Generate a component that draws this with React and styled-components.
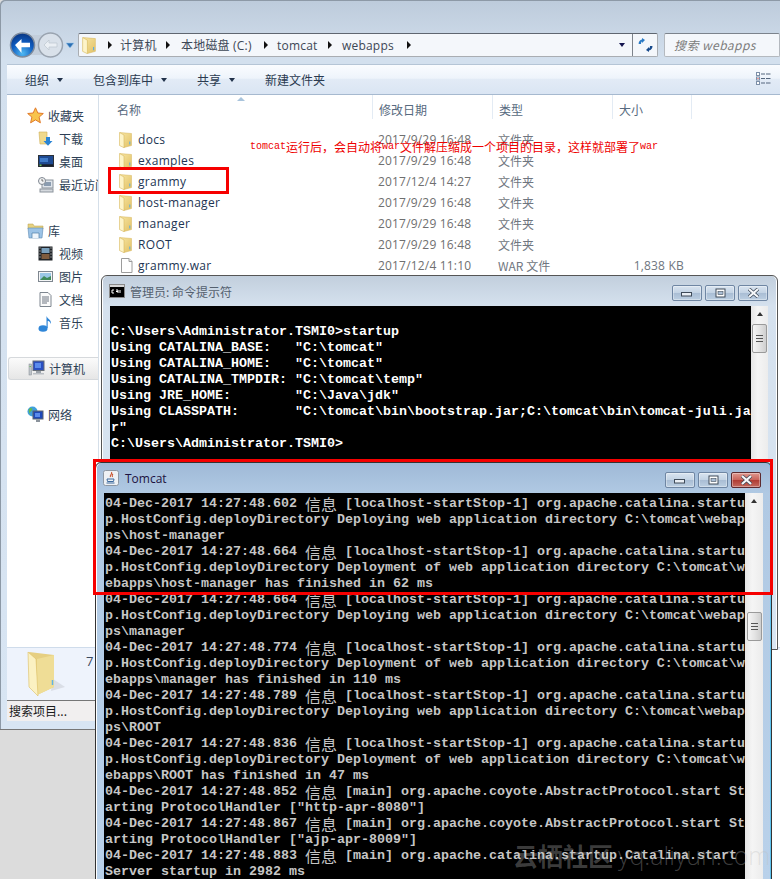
import React from "react";
import styled, { createGlobalStyle } from "styled-components";

const UI = `"Open Sans", "Noto Sans CJK SC", sans-serif`;
const CJK = `"Noto Sans CJK SC", "Open Sans", sans-serif`;
const MONO = `"Liberation Mono", "DejaVu Sans Mono", monospace`;
const COLS = "273px 120px 120px 80px";

const Global = createGlobalStyle`
  html, body { margin: 0; padding: 0; height: 879px; overflow: hidden; background: #dcdcdc; }
  * { box-sizing: border-box; }
`;

const Desktop = styled.div`
  position: relative; width: 780px; height: 879px; overflow: hidden; background: #dcdcdc;
`;
const Explorer = styled.div`
  width: 780px; height: 730px; display: flex; flex-direction: column;
  background: linear-gradient(#bdcbdb 0, #d3e0ee 60px, #d8e5f3 100%);
  border-bottom: 1px solid #777; border-radius: 5px 0 0 0;
  box-shadow: inset 1px 1px 0 #8d99a6;
  font-family: ${UI}; overflow: hidden;
`;
const AddressRow = styled.div`
  margin-top: 33px; height: 24px; display: flex; align-items: center; padding-left: 9px;
`;
const NavGroup = styled.div`
  width: 69px; height: 26px; display: flex; align-items: center; flex: none;
`;
const AddressBox = styled.div`
  width: 580px; height: 24px; display: flex; align-items: center; flex: none;
  background: #f4f7fb; border: 1px solid #a9adb2; border-top-color: #5f6670; border-radius: 2px;
  position: relative;
`;
const Crumbs = styled.div`
  flex: 1; display: flex; align-items: center; height: 100%; padding-left: 3px; min-width: 0;
`;
const CrumbText = styled.span`
  font-size: 12px; color: #3d4756; white-space: nowrap; width: ${p => p.$w}px; letter-spacing: .2px;
`;
const CrumbSep = styled.span`
  width: 0; height: 0; border-style: solid; border-width: 4.5px 0 4.5px 4px;
  border-color: transparent transparent transparent #111; margin: 0 ${p => p.$r}px 0 ${p => p.$l}px; flex: none;
`;
const DropCaret = styled.span`
  width: 0; height: 0; border-style: solid; border-width: 4px 3.5px 0 3.5px;
  border-color: #14144f transparent transparent transparent; margin-right: 7px;
`;
const RefreshBox = styled.div`
  width: 25px; height: 100%; border-left: 1px solid #7d838b; display: flex; align-items: center; justify-content: center;
`;
const SearchBox = styled.div`
  margin-left: 6px; flex: 1; height: 24px; background: #f4f7fb; border: 1px solid #b4b9bf; border-top-color: #7c838c;
  border-radius: 2px; padding-left: 9px; font: italic 12px ${CJK}; color: #7c7c7c; line-height: 22px; white-space: nowrap;
  letter-spacing: .45px;
`;
const Toolbar = styled.div`
  margin-top: 7px; height: 31px; margin-left: 7px; display: flex; align-items: center; position: relative;
  background: linear-gradient(#fafcff 0, #eef4fb 45%, #e2ebf6 50%, #dae5f3 100%);
  border-top: 1px solid #b5c5d6; border-bottom: 1px solid #a6b9cf;
  padding-left: 18px; font-size: 12px; color: #2a3a50; font-family: ${CJK};
`;
const ToolItem = styled.span`
  display: flex; align-items: center; gap: 8px; width: ${p => p.$w}px; white-space: nowrap;
`;
const ToolCaret = styled.span`
  width: 0; height: 0; border-style: solid; border-width: 4px 3.5px 0 3.5px;
  border-color: #22324a transparent transparent transparent;
`;
const ViewIcon = styled.span`
  position: absolute; left: 749px; top: 7px; line-height: 0;
`;
const Body = styled.div`
  flex: 1; display: flex; margin-left: 7px; background: #fff; min-height: 0;
`;
const Sidebar = styled.div`
  width: 92px; flex: none; border-right: 1px solid #d5dfe9; padding-top: 9px; overflow: hidden;
  display: flex; flex-direction: column; font-family: ${CJK}; font-size: 12px; color: #2d3f55;
`;
const SideRow = styled.div`
  height: 23px; display: flex; align-items: center; white-space: nowrap; flex: none;
  padding-left: ${p => (p.$child ? 31 : 20)}px; gap: ${p => (p.$child ? 5 : 4)}px;
  ${p => p.$selected && `
    margin: 0 0 0 1px; padding-left: 19px; border: 1px solid #d6d9dc; border-right: 0; border-radius: 3px 0 0 3px;
    background: linear-gradient(#fbfbfb, #e6e6e6);
  `}
`;
const SideGap = styled.div`height: 23px; flex: none;`;
const IconSlot = styled.span`
  width: ${p => p.$s}px; height: ${p => p.$h || p.$s}px; flex: none; line-height: 0; display: block;
`;
const Main = styled.div`flex: 1; display: flex; flex-direction: column; min-width: 0;`;
const HeaderRow = styled.div`
  height: 29px; display: grid; grid-template-columns: ${COLS}; position: relative;
  font-family: ${CJK}; font-size: 12px; color: #576a80;
`;
const HeadCell = styled.div`
  padding: 6px 0 0 ${p => (p.$first ? 18 : 6)}px; height: 24px; line-height: 18px;
  ${p => !p.$first && `border-left: 1px solid #e3ebf4;`}
  ${p => p.$last && `border-right: 1px solid #e3ebf4;`}
`;
const SortArrow = styled.span`
  position: absolute; left: 138px; top: 2px; width: 0; height: 0; border-style: solid;
  border-width: 0 4px 4px 4px; border-color: transparent transparent #a9c4dc transparent;
`;
const FileList = styled.div`padding-top: 5px;`;
const FileRow = styled.div`
  height: 21px; display: grid; grid-template-columns: ${COLS}; align-items: center;
  font-size: 12px; white-space: nowrap;
`;
const NameCell = styled.div`
  display: flex; align-items: center; gap: 4px; padding-left: 20px; color: #1c3553; letter-spacing: .32px;
`;
const DateCell = styled.div`padding-left: 6px; color: #6f6f6f; letter-spacing: .18px;`;
const TypeCell = styled.div`padding-left: 6px; color: #6f7680; font-family: ${CJK};`;
const SizeCell = styled.div`text-align: right; padding-right: 8px; color: #6f7680; letter-spacing: .2px;`;
const Spacer = styled.div`flex: 1;`;
const DetailPane = styled.div`
  margin-left: 7px; height: 53px; flex: none; background: #eef3fc; border-top: 1px solid #cfdceb;
  padding: 3px 0 0 20px; display: flex; gap: 21px; font-size: 13px; color: #3b4a60;
`;
const Status = styled.div`
  margin: 0 0 8px 7px; height: 21px; flex: none; background: #f1efef; border-top: 1px solid #767676;
  padding-left: 2px; font: 12px/20px ${CJK}; color: #1b1b1b;
`;

const Win = styled.div`
  position: absolute; left: ${p => p.$x}px; top: ${p => p.$y}px; width: ${p => p.$w}px; height: ${p => p.$h}px;
  border: 1px solid ${p => (p.$active ? "#333" : "#555")}; border-radius: 6px 6px 0 0; overflow: hidden;
  display: flex; flex-direction: column; padding: 0 ${p => p.$padR}px 0 ${p => p.$padL}px;
  background: ${p => p.$active
    ? "linear-gradient(#9fb9d7 0, #b0c9e3 30px, #b9d1ea 100%)"
    : "linear-gradient(#c2cfdd 0, #d5e1ee 30px, #d9e6f3 100%)"};
  box-shadow: ${p => (p.$active ? "inset 1px 0 0 #fff, inset -1px 0 0 #5fc3ee" : "inset 1px 0 0 #fff, inset -1px 0 0 #fff")};
`;
const TitleBar = styled.div`
  height: ${p => p.$h}px; flex: none; display: flex; align-items: center; gap: ${p => p.$gap}px; position: relative;
  font-size: 12px; margin-left: -1px;
`;
const TitleText = styled.span`
  font-family: ${p => (p.$latin ? UI : CJK)}; font-size: 12px; color: ${p => p.$c};
`;
const Captions = styled.div`
  position: absolute; right: ${p => p.$r}px; top: ${p => p.$t}px; display: flex; gap: 3px;
`;
const CapBtn = styled.div`
  width: 30px; height: 16px; border-radius: 2px; display: flex; align-items: center; justify-content: center;
  border: 1px solid ${p => (p.$close ? "#5d2a2f" : "#6f86a3")};
  background: ${p => (p.$close
    ? "linear-gradient(#e0988f 0, #c9645b 48%, #b03c33 52%, #c46a5f 100%)"
    : "linear-gradient(#d9e4f0 0, #c3d3e4 48%, #a9bdd4 52%, #bccfe2 100%)")};
  box-shadow: inset 0 0 0 1px rgba(255,255,255,.35);
`;
const TermRow = styled.div`flex: 1; display: flex; min-height: 0;`;
const Term = styled.div`
  width: ${p => p.$w}px; flex: none; background: #000; overflow: hidden; padding-top: ${p => p.$pt}px;
  padding-left: 1px; color: ${p => p.$c};
  font: bold 13.33px/16px ${MONO};
`;
const TermLine = styled.div`height: 16px; white-space: pre; overflow: hidden; width: 640px;`;
const TermCjk = styled.span`
  font: 400 16px/16px ${CJK}; display: inline-block; width: 32px; height: 16px; vertical-align: top; color: inherit; letter-spacing: 0;
`;
const ScrollTrack = styled.div`
  flex: none; width: ${p => p.$w}px; background: linear-gradient(90deg, #e6e6e6, #f5f5f5 40%, #ececec); position: relative;
  display: flex; flex-direction: column; align-items: center;
`;
const ScrollUp = styled.span`
  margin-top: 6px; width: 0; height: 0; border-style: solid; border-width: 0 3.5px 4px 3.5px;
  border-color: transparent transparent #333 transparent;
`;
const Thumb = styled.div`
  margin-top: ${p => p.$t}px; width: 15px; height: 29px; border: 1px solid #9a9a9a; border-radius: 2px;
  background: linear-gradient(90deg, #f5f5f5, #e4e4e4 50%, #cfcfcf);
  display: flex; flex-direction: column; justify-content: center; align-items: center; gap: 2px;
`;
const Grip = styled.span`width: 7px; height: 1px; background: #555;`;
const RedBox = styled.div`
  position: absolute; left: ${p => p.$x}px; top: ${p => p.$y}px; width: ${p => p.$w}px; height: ${p => p.$h}px;
  border: 3px solid #f60000; pointer-events: none;
`;
const Note = styled.div`
  position: absolute; left: 250px; top: 139px; color: #ee0000; font: 12px/16px ${CJK}; white-space: nowrap; display: flex;
`;
const NoteLatin = styled.span`font: 400 10px/16px ${MONO};`;
const RightEdge = styled.div`
  position: absolute; left: 772px; top: 650px; width: 8px; bottom: 0; background: #fff;
`;
const Watermark = styled.div`
  position: absolute; left: 513px; top: 839px; display: flex; align-items: center; gap: 5px; white-space: nowrap;
  color: rgba(190,190,190,.32); pointer-events: none;
`;
const MarkCn = styled.span`font: 700 25px/32px ${CJK};`;
const MarkEn = styled.span`font: 300 25px/32px "Open Sans", sans-serif;`;

const Folder = ({ w = 13, h = 16 }) => (
  <svg width={w} height={h} viewBox="0 0 13 16">
    <defs>
      <linearGradient id="fb" x1="0" x2="1" y1="0" y2="1">
        <stop offset="0" stopColor="#f7e6a4" /><stop offset="1" stopColor="#e2c164" />
      </linearGradient>
    </defs>
    <path d="M1 .5 L12.500 1.500 V13.500 L5 15.500Z" fill="url(#fb)" stroke="#d6b65e" strokeWidth=".5" />
    <path d="M.5.5 L5 3 V15.700 L.5 13.500Z" fill="#fdf4c9" stroke="#d8b95f" strokeWidth=".6" />
    <path d="M10.800 9.500v3" stroke="#58ade6" strokeWidth="1" />
  </svg>
);
const BigFolder = () => (
  <svg width="38" height="46" viewBox="0 0 38 46">
    <path d="M26 28 L38 36 L24 40Z" fill="#cfd3da" opacity=".65" />
    <path d="M2 1 L27 4 V36 L10 44Z" fill="#e6cf82" />
    <path d="M10 8 L27 4 V36 L10 44Z" fill="#efdd96" />
    <path d="M1 1 L9 8 L11 45 L2 36Z" fill="#fbf1c2" stroke="#dcbe62" strokeWidth=".6" />
    <path d="M25.500 29v5" stroke="#5fb3e6" strokeWidth="1.500" />
  </svg>
);
const DocFile = () => (
  <svg width="15" height="15" viewBox="0 0 15 15">
    <path d="M2.500.5H10L13 3.500V14.500H2.500Z" fill="#fff" stroke="#9c9c9c" />
    <path d="M10 .5V3.500H13" fill="#ececec" stroke="#9c9c9c" />
  </svg>
);
const Star = () => (
  <svg width="17" height="17" viewBox="0 0 17 17">
    <path d="M8.500.8 10.800 6 16.300 6.500 12.100 10.100 13.400 15.800 8.500 12.900 3.600 15.800 4.900 10.100.7 6.500 6.200 6Z" fill="#f8c44b" stroke="#e0792a" strokeWidth="1" />
  </svg>
);
const Download = () => (
  <svg width="15" height="15" viewBox="0 0 15 15">
    <path d="M1 1 L9 1 V13 H2Z" fill="#efd98c" stroke="#cfae57" strokeWidth=".6" />
    <path d="M8 6h4v4h2.500l-4.500 4.700L5.500 10H8Z" fill="#2a84d4" />
  </svg>
);
const Screen = () => (
  <svg width="16" height="15" viewBox="0 0 16 15">
    <rect x=".5" y="1.500" width="15" height="11" fill="#1e4a92" stroke="#2c3138" />
    <rect x="1" y="10.300" width="14" height="2" fill="#1a1f2a" />
    <rect x="2" y="4" width="8" height="4" fill="#3f7ac8" />
    <rect x="1.500" y="10.500" width="2" height="1.500" fill="#6bbf5a" />
  </svg>
);
const Recent = () => (
  <svg width="16" height="16" viewBox="0 0 16 16">
    <rect x="4" y="3" width="11" height="8" fill="#dfe4ea" stroke="#8b939c" />
    <rect x="6" y="5" width="7" height="4" fill="#8b9cb0" />
    <rect x="2" y="12" width="13" height="3" fill="#d5d9de" stroke="#8b939c" />
    <circle cx="4" cy="4" r="3.500" fill="#f3f4f5" stroke="#7f8790" />
    <path d="M4 2v2h1.500" stroke="#444" strokeWidth=".7" fill="none" />
  </svg>
);
const Library = () => (
  <svg width="17" height="17" viewBox="0 0 17 17">
    <path d="M1 2h5l1 2h9v3H1Z" fill="#e7d27f" stroke="#b69f4f" strokeWidth=".5" />
    <path d="M1 6h15l-1 10H2Z" fill="#9cc3e6" stroke="#5c8ab4" strokeWidth=".6" />
    <path d="M5 16v-5h7v5" fill="#eef5fb" stroke="#4f7ea8" strokeWidth=".7" />
  </svg>
);
const Video = () => (
  <svg width="15" height="15" viewBox="0 0 15 15">
    <rect x=".5" y=".5" width="14" height="14" fill="#202428" />
    <rect x="3.500" y="2" width="8" height="5" fill="#7aa0bc" />
    <rect x="3.500" y="8" width="8" height="5" fill="#7f5c3e" />
    <path d="M1.500 2h1M1.500 5h1M1.500 8h1M1.500 11h1M12.500 2h1M12.500 5h1M12.500 8h1M12.500 11h1" stroke="#ddd" strokeWidth="1.200" />
  </svg>
);
const Picture = () => (
  <svg width="15" height="15" viewBox="0 0 15 15">
    <rect x=".5" y="2.500" width="14" height="10" fill="#f5f6f7" stroke="#7f8790" />
    <rect x="2" y="4" width="11" height="7" fill="#9bc7e6" />
    <path d="M2 11 6 7l3 2 4-2v4Z" fill="#3f8a5a" />
  </svg>
);
const Doc = () => (
  <svg width="15" height="15" viewBox="0 0 15 15">
    <path d="M2 .5H10L13 3.500V14.500H2Z" fill="#fbfbfb" stroke="#7f8790" />
    <path d="M4 5h7M4 7h7M4 9h7M4 11h5" stroke="#6c7580" />
  </svg>
);
const Music = () => (
  <svg width="15" height="17" viewBox="0 0 15 17">
    <ellipse cx="5" cy="13.500" rx="4.500" ry="3.200" fill="#2f86d8" />
    <path d="M8.500 13V1c1 3 5 3.500 4.500 8-1-2.500-2.500-3-3.300-3V13Z" fill="#2f86d8" />
  </svg>
);
const Computer = () => (
  <svg width="17" height="17" viewBox="0 0 17 17">
    <rect x="5" y="1" width="11" height="9.500" fill="#2a4fc0" stroke="#666d76" />
    <rect x="7" y="3" width="6" height="5" fill="#5b8bec" />
    <rect x="8" y="11" width="5" height="2" fill="#9aa1a9" />
    <rect x="5" y="13" width="11" height="1.500" fill="#b9bec4" />
    <rect x="1" y="4" width="2.500" height="11" fill="#bfc4ca" stroke="#7f8790" strokeWidth=".5" />
    <rect x="1.500" y="6" width="1.500" height="1" fill="#6bbf5a" />
  </svg>
);
const Network = () => (
  <svg width="17" height="17" viewBox="0 0 17 17">
    <circle cx="5.500" cy="5.500" r="5" fill="#3f9fdc" />
    <path d="M2 3c2-2 4-1 3 1S2 6 3 8 1 6 2 3Z" fill="#63b94e" />
    <rect x="6" y="5" width="10" height="8" fill="#1e49b8" stroke="#5c646d" />
    <rect x="8" y="7" width="5" height="4" fill="#5b8bec" />
    <rect x="9" y="13.500" width="4" height="2.500" fill="#8b939c" />
  </svg>
);
const CmdIcon = () => (
  <svg width="16" height="14" viewBox="0 0 16 14">
    <rect x=".5" y=".5" width="15" height="13" fill="#000" stroke="#8a8a8a" />
    <rect x="1" y="1" width="14" height="2" fill="#d6d6d6" />
    <path d="M3 6H5M3 6V9M3 9H5M7 6H9V9M7 7.500H9M11 6V9" stroke="#fff" strokeWidth="1" fill="none" />
  </svg>
);
const JavaIcon = () => (
  <svg width="16" height="16" viewBox="0 0 16 16">
    <rect x=".5" y=".5" width="15" height="15" rx="2" fill="#eef1f4" stroke="#8d97a3" />
    <path d="M8.500 2c1.500 2-2.500 3-1 5M10 4c-1.500 1-1 2-.5 3" stroke="#c9502a" strokeWidth="1.100" fill="none" />
    <path d="M4 9h7l-.5 2.500H4.500ZM3.500 13h8" stroke="#3d6a9e" strokeWidth="1" fill="none" />
  </svg>
);
const BackBtn = () => (
  <svg width="69" height="26" viewBox="0 0 69 26">
    <defs>
      <radialGradient id="bk" cx=".5" cy=".85" r=".85">
        <stop offset="0" stopColor="#4fb8f2" /><stop offset=".55" stopColor="#0f5cc0" /><stop offset="1" stopColor="#0a347f" />
      </radialGradient>
    </defs>
    <rect x="12" y="3" width="40" height="20" rx="10" fill="#c3cedb" />
    <circle cx="41.500" cy="13" r="12" fill="#d9e1ea" stroke="#9aa4b0" strokeWidth="1.500" />
    <path d="M35 13l5-5v3h8v4h-8v3Z" fill="#eaeff4" stroke="#bcc5cf" strokeWidth=".7" />
    <circle cx="13.500" cy="13" r="12" fill="url(#bk)" stroke="#7e8b9c" strokeWidth="1.500" />
    <path d="M6 13l6.500-6v3.800H21v4.400h-8.500V21Z" fill="#fff" />
    <path d="M57 11h8l-4 5Z" fill="#2a6fb4" stroke="#9ec6e8" strokeWidth=".6" />
  </svg>
);
const RefreshIcon = () => (
  <svg width="15" height="16" viewBox="0 0 15 16">
    <path d="M7 3 4 1v1.500C2 3 .6 4.500 .6 7H3c0-1.500.5-2.200 1-2.500V6Z" fill="#2a7ac4" />
    <path d="M8 13l3 2v-1.500c2-.5 3.500-2 3.500-4.500H12c0 1.500-.5 2.200-1 2.500V10Z" fill="#174a8c" />
  </svg>
);
const Details = () => (
  <svg width="15" height="13" viewBox="0 0 15 13">
    <rect x=".5" y=".5" width="3" height="3" fill="#fff" stroke="#7c8fa8" />
    <rect x=".5" y="5" width="3" height="3" fill="#fff" stroke="#7c8fa8" />
    <rect x="1.500" y="6" width="1" height="1" fill="#d33" />
    <rect x=".5" y="9.500" width="3" height="3" fill="#fff" stroke="#7c8fa8" />
    <path d="M5 2h4M10 2h4.500M5 6.500h4M10 6.500h4.500M5 11h4M10 11h4.500" stroke="#55677e" />
  </svg>
);
const Cap = ({ kind }) => {
  if (kind === "min") return <svg width="12" height="7" viewBox="0 0 12 7"><rect x=".5" y="2.500" width="10" height="3.500" fill="#e9eef4" stroke="#3e4a58" /></svg>;
  if (kind === "max") return <svg width="11" height="10" viewBox="0 0 11 10"><rect x="1" y="1" width="9" height="8" fill="#fff" stroke="#3e4a58" /><rect x="3" y="3.500" width="5" height="3" fill="#a9bdd4" stroke="#3e4a58" strokeWidth=".6" /></svg>;
  return <svg width="13" height="10" viewBox="0 0 13 10"><path d="M2 1 L11 9 M11 1 L2 9" stroke="#3e4a58" strokeWidth="3.600" /><path d="M2 1 L11 9 M11 1 L2 9" stroke="#f6f8fa" strokeWidth="2.200" /></svg>;
};

const files = [
  ["docs", "2017/9/29 16:48", "文件夹"],
  ["examples", "2017/9/29 16:48", "文件夹"],
  ["grammy", "2017/12/4 14:27", "文件夹"],
  ["host-manager", "2017/9/29 16:48", "文件夹"],
  ["manager", "2017/9/29 16:48", "文件夹"],
  ["ROOT", "2017/9/29 16:48", "文件夹"],
  ["grammy.war", "2017/12/4 11:10", "WAR 文件", "1,838 KB"],
];

const cmdLines = [
  "",
  "C:\\Users\\Administrator.TSMI0>startup",
  'Using CATALINA_BASE:   "C:\\tomcat"',
  'Using CATALINA_HOME:   "C:\\tomcat"',
  'Using CATALINA_TMPDIR: "C:\\tomcat\\temp"',
  'Using JRE_HOME:        "C:\\Java\\jdk"',
  'Using CLASSPATH:       "C:\\tomcat\\bin\\bootstrap.jar;C:\\tomcat\\bin\\tomcat-juli.ja',
  'r"',
  "C:\\Users\\Administrator.TSMI0>",
];

const head = (t) => `04-Dec-2017 14:27:48.${t} 信息 [localhost-startStop-1] org.apache.catalina.startu`;
const dep = "p.HostConfig.deployDirectory Deploying web application directory C:\\tomcat\\webap";
const fin = "p.HostConfig.deployDirectory Deployment of web application directory C:\\tomcat\\w";
const tomcatLines = [
  head("602"), dep, "ps\\host-manager",
  head("664"), fin, "ebapps\\host-manager has finished in 62 ms",
  head("664"), dep, "ps\\manager",
  head("774"), fin, "ebapps\\manager has finished in 110 ms",
  head("789"), dep, "ps\\ROOT",
  head("836"), fin, "ebapps\\ROOT has finished in 47 ms",
  "04-Dec-2017 14:27:48.852 信息 [main] org.apache.coyote.AbstractProtocol.start St",
  'arting ProtocolHandler ["http-apr-8080"]',
  "04-Dec-2017 14:27:48.867 信息 [main] org.apache.coyote.AbstractProtocol.start St",
  'arting ProtocolHandler ["ajp-apr-8009"]',
  "04-Dec-2017 14:27:48.883 信息 [main] org.apache.catalina.startup.Catalina.start",
  "Server startup in 2982 ms",
];

const Line = ({ text }) => {
  const parts = text.split("信息");
  return (
    <TermLine>
      {parts.length === 2 ? <>{parts[0]}<TermCjk>信息</TermCjk>{parts[1]}</> : text || " "}
    </TermLine>
  );
};

const Side = ({ icon, label, child, selected }) => (
  <SideRow $child={child} $selected={selected}>
    <IconSlot $s={child ? 16 : 17}>{icon}</IconSlot>
    <span>{label}</span>
  </SideRow>
);

export default function App() {
  return (
    <Desktop>
      <Global />
      <Explorer>
        <AddressRow>
          <NavGroup><BackBtn /></NavGroup>
          <AddressBox>
            <Crumbs>
              <IconSlot $s={15} $h={17}><Folder w={14} h={17} /></IconSlot>
              <CrumbSep $l={11} $r={8} />
              <CrumbText $w={38}>计算机</CrumbText>
              <CrumbSep $l={8} $r={11} />
              <CrumbText $w={75}>本地磁盘 (C:)</CrumbText>
              <CrumbSep $l={8} $r={9} />
              <CrumbText $w={42}>tomcat</CrumbText>
              <CrumbSep $l={9} $r={10} />
              <CrumbText $w={56}>webapps</CrumbText>
              <CrumbSep $l={9} $r={0} />
              <Spacer />
              <DropCaret />
            </Crumbs>
            <RefreshBox><RefreshIcon /></RefreshBox>
          </AddressBox>
          <SearchBox>搜索 webapps</SearchBox>
        </AddressRow>
        <Toolbar>
          <ToolItem $w={68}>组织<ToolCaret /></ToolItem>
          <ToolItem $w={104}>包含到库中<ToolCaret /></ToolItem>
          <ToolItem $w={68}>共享<ToolCaret /></ToolItem>
          <ToolItem $w={80}>新建文件夹</ToolItem>
          <ViewIcon><Details /></ViewIcon>
        </Toolbar>
        <Body>
          <Sidebar>
            <Side icon={<Star />} label="收藏夹" />
            <Side child icon={<Download />} label="下载" />
            <Side child icon={<Screen />} label="桌面" />
            <Side child icon={<Recent />} label="最近访问的位置" />
            <SideGap />
            <Side icon={<Library />} label="库" />
            <Side child icon={<Video />} label="视频" />
            <Side child icon={<Picture />} label="图片" />
            <Side child icon={<Doc />} label="文档" />
            <Side child icon={<Music />} label="音乐" />
            <SideGap />
            <Side selected icon={<Computer />} label="计算机" />
            <SideGap />
            <Side icon={<Network />} label="网络" />
          </Sidebar>
          <Main>
            <HeaderRow>
              <HeadCell $first>名称</HeadCell>
              <HeadCell>修改日期</HeadCell>
              <HeadCell>类型</HeadCell>
              <HeadCell $last>大小</HeadCell>
              <SortArrow />
            </HeaderRow>
            <FileList>
              {files.map((f) => (
                <FileRow key={f[0]}>
                  <NameCell>
                    <IconSlot $s={15} $h={16}>{f[3] ? <DocFile /> : <Folder />}</IconSlot>
                    {f[0]}
                  </NameCell>
                  <DateCell>{f[1]}</DateCell>
                  <TypeCell>{f[2]}</TypeCell>
                  <SizeCell>{f[3]}</SizeCell>
                </FileRow>
              ))}
            </FileList>
          </Main>
        </Body>
        <DetailPane>
          <IconSlot $s={38} $h={46}><BigFolder /></IconSlot>
          <span>7 个对象</span>
        </DetailPane>
        <Status>搜索项目...</Status>
      </Explorer>

      <Note>
        <NoteLatin>tomcat</NoteLatin>运行后，会自动将<NoteLatin>war</NoteLatin>文件解压缩成一个项目的目录，这样就部署了<NoteLatin>war</NoteLatin>
      </Note>
      <RedBox $x={108} $y={167} $w={121} $h={27} />
      <RightEdge />

      <Win $x={101} $y={275} $w={677} $h={375} $padL={8} $padR={9}>
        <TitleBar $h={30} $gap={5}>
          <CmdIcon />
          <TitleText $c="#54606e">管理员: 命令提示符</TitleText>
          <Captions $r={0} $t={9}>
            <CapBtn><Cap kind="min" /></CapBtn>
            <CapBtn><Cap kind="max" /></CapBtn>
            <CapBtn><Cap kind="close" /></CapBtn>
          </Captions>
        </TitleBar>
        <TermRow>
          <Term $w={641} $pt={2} $c="#fff">
            {cmdLines.map((l, i) => <Line key={i} text={l} />)}
          </Term>
          <ScrollTrack $w={17}>
            <ScrollUp />
            <Thumb $t={8}><Grip /><Grip /><Grip /></Thumb>
          </ScrollTrack>
        </TermRow>
      </Win>

      <Win $x={95} $y={462} $w={677} $h={420} $active $padL={8} $padR={8}>
        <TitleBar $h={30} $gap={6}>
          <JavaIcon />
          <TitleText $latin $c="#1d1240">Tomcat</TitleText>
          <Captions $r={2} $t={9}>
            <CapBtn><Cap kind="min" /></CapBtn>
            <CapBtn><Cap kind="max" /></CapBtn>
            <CapBtn $close><Cap kind="close" /></CapBtn>
          </Captions>
        </TitleBar>
        <TermRow>
          <Term $w={641} $pt={3} $c="#c6c6c6">
            {tomcatLines.map((l, i) => <Line key={i} text={l} />)}
          </Term>
          <ScrollTrack $w={18}>
            <ScrollUp />
            <Thumb $t={109}><Grip /><Grip /><Grip /></Thumb>
          </ScrollTrack>
        </TermRow>
      </Win>

      <RedBox $x={93} $y={459} $w={680} $h={136} />
      <Watermark>
        <MarkCn>云栖社区</MarkCn>
        <MarkEn>yq.aliyun.com</MarkEn>
      </Watermark>
    </Desktop>
  );
}
